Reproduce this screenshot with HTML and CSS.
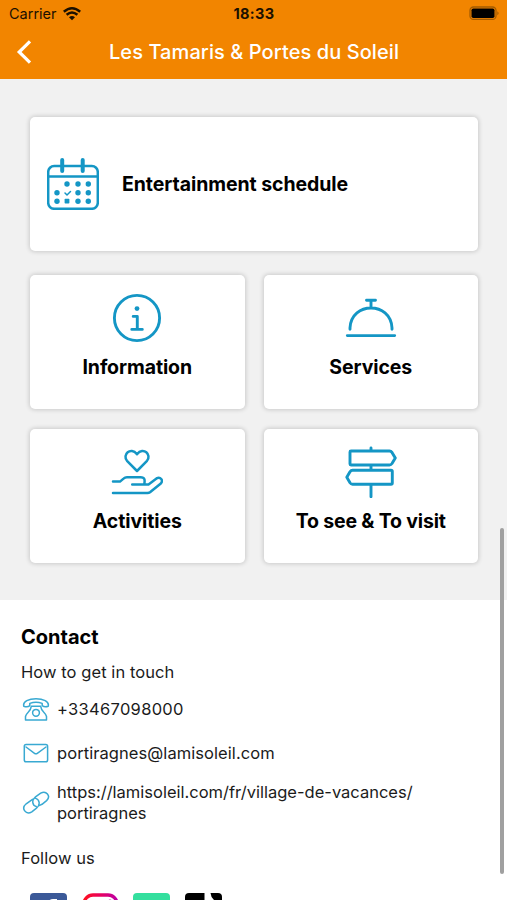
FILE: index.html
```html
<!DOCTYPE html>
<html lang="en">
<head>
<meta charset="utf-8">
<title>Les Tamaris &amp; Portes du Soleil</title>
<link rel="stylesheet" href="styles.css">
</head>
<body>
<header class="header">
  <div class="status">
    <div class="network"><span class="carrier">Carrier</span>
      <svg class="wifi" width="18" height="14" viewBox="0 0 18 14"><path d="M.8 4.8Q9-2.2 17.2 4.8M3.6 7.8Q9 3.2 14.4 7.8" fill="none" stroke="#1b1000" stroke-width="2.5"/><path d="M6 10.2Q9 7.8 12 10.2L9 13.2Z" fill="#1b1000"/></svg>
    </div>
    <time class="clock">18:33</time>
    <svg class="battery" width="31" height="15" viewBox="0 0 31 15"><rect x="1" y="1" width="26" height="12.4" rx="3.5" fill="none" stroke="#a35b00" stroke-width="1.3"/><rect x="2.5" y="2.4" width="23" height="9.6" rx="1.8" fill="#000"/><path d="M28.3 5.2Q31 7.2 28.3 9.2Z" fill="#a35b00"/></svg>
  </div>
  <nav class="navbar">
    <svg class="back" width="16" height="26" viewBox="0 0 16 26"><path d="M14 2.3L3.2 13L14 23.7" fill="none" stroke="#fff" stroke-width="3.2"/></svg>
    <h1 class="title">Les Tamaris &amp; Portes du Soleil</h1>
    <span></span>
  </nav>
</header>
<main>
  <section class="menu">
    <a class="card wide">
      <svg class="icon" width="52" height="52" viewBox="0 0 52 52"><g class="line"><rect x="1.2" y="8" width="49.6" height="42.8" rx="6"/><path d="M1.5 18.5H50.5"/><path d="M15.2 2V13M35.7 2V13" stroke-width="4"/><path d="M18 35L20 37L23.5 33.5" stroke-width="1.5"/></g><g class="dots"><circle cx="20" cy="26" r="2.7"/><circle cx="31" cy="26" r="2.7"/><circle cx="41.3" cy="26" r="2.7"/><circle cx="10" cy="34.7" r="2.7"/><circle cx="31" cy="34.7" r="2.7"/><circle cx="41.3" cy="34.7" r="2.7"/><circle cx="10" cy="43.2" r="2.7"/><rect x="17.6" y="40.8" width="4.8" height="4.8" rx=".8"/><circle cx="31" cy="43.2" r="2.7"/><circle cx="41.3" cy="43.2" r="2.7"/></g></svg>
      <span class="label l-schedule">Entertainment schedule</span>
    </a>
    <a class="card">
      <svg class="icon" width="52" height="52" viewBox="0 0 52 52"><g class="line bold"><circle cx="26" cy="26" r="22.6"/><path d="M22.2 24.4H26.3V37.2M20.8 37.4H31.3"/></g><circle class="dots" cx="26" cy="16.6" r="2.4"/></svg>
      <span class="label">Information</span>
    </a>
    <a class="card">
      <svg class="icon" width="52" height="52" viewBox="0 0 52 52"><g class="line bold"><path d="M21.5 8.2H30.5M26 8.5V15M5 37.3V35.8C6.5 9.3 45.5 9.3 47 35.8V37.3M2.3 43.6H49.7"/></g></svg>
      <span class="label">Services</span>
    </a>
    <a class="card">
      <svg class="icon" width="52" height="52" viewBox="0 0 52 52"><g class="line"><path d="M26 25L16 14.8C11 9 19.5.2 26 8.2C32.5.2 41 9 36 14.8Z"/><path d="M2 35.6H9L12.5 32.6Q14 31.2 16 31.2H29.5C34 31.2 34 34 33.3 38.3M21.2 38.4H37.5L45.5 32.4C49.3 30.4 53 34.2 49.5 37.8L39 46.3Q38 47 36.5 47H2"/></g></svg>
      <span class="label">Activities</span>
    </a>
    <a class="card">
      <svg class="icon" width="52" height="52" viewBox="0 0 52 52"><g class="line bold"><path d="M26 2V5M26 19V24M26 39V50.7M6 5H44.5Q46 5 47 6.4L50.3 12L47 17.5Q46 19 44.5 19H6Q5 19 5 18V6Q5 5 6 5ZM46 24.3H7.5Q6 24.3 5 25.8L1.8 31.3L5 36.8Q6 38.3 7.5 38.3H46Q47.3 38.3 47.3 37V25.5Q47.3 24.3 46 24.3Z"/></g></svg>
      <span class="label l-visit">To see &amp; To visit</span>
    </a>
  </section>
  <section class="contact">
    <h2 class="heading">Contact</h2>
    <p class="text intro">How to get in touch</p>
    <div class="row phone">
      <svg class="small" width="28" height="26" viewBox="0 0 28 26"><g class="thin"><path d="M1.8 10.2C-1 .2 29 .2 26.2 10.2C24 11 21.5 10.6 20.2 9.6V7.4Q14 5.2 7.8 7.4V9.6C6.5 10.8 3.8 11 1.8 10.2Z"/><path d="M3.5 24V20.5Q4 18.5 6 16.5Q8.8 14 9.3 10.3H18.7Q19.2 14 22 16.5Q24 18.5 24.5 20.5V24Z"/><circle cx="14" cy="16.8" r="3.4"/></g></svg>
      <span class="text l-phone">+33467098000</span>
    </div>
    <div class="row mail">
      <svg class="small" width="28" height="26" viewBox="0 0 28 26"><g class="thin"><rect x="2.3" y="4.5" width="23.3" height="17.2" rx="1.8"/><path d="M4 7L12.5 13.3Q13.9 14.3 15.3 13.3L24 7"/></g></svg>
      <span class="text l-mail">portiragnes@lamisoleil.com</span>
    </div>
    <div class="row link">
      <svg class="small" width="28" height="26" viewBox="0 0 28 26"><g class="thin"><path d="M10.5 10.3L4.2 14.8C-1.4 19.5 4 26.3 9.8 22.8L14.5 19.2C18.8 15.6 17.4 10.6 13.8 9.4M17.6 16.4L20 15.3L24.6 11.6C29.4 7 24 1 18.7 4.2L13.5 7.8C9.2 11.4 10.4 16.4 14.2 17.4"/></g></svg>
      <span class="text l-url">https://lamisoleil.com/fr/village-de-vacances/<br>portiragnes</span>
    </div>
    <p class="text follow">Follow us</p>
    <div class="social">
      <svg width="37" height="37" viewBox="0 0 37 37"><rect width="37" height="37" rx="4" fill="#3b5998"/><path d="M27 6H23Q18 6 18 12V16H14V21H18V37H24V21H28L29 16H24V13Q24 11 27 11Z" fill="#fff"/></svg>
      <svg width="37" height="37" viewBox="0 0 37 37"><defs><linearGradient id="ig"><stop stop-color="#ff1020"/><stop offset=".5" stop-color="#e8005e"/><stop offset="1" stop-color="#bd00a5"/></linearGradient></defs><g fill="none" stroke="url(#ig)" stroke-width="3.5"><rect x="2" y="2" width="33" height="33" rx="9"/><circle cx="18.5" cy="18.5" r="8"/></g><circle cx="28" cy="8.5" r="2" fill="#bd00a5"/></svg>
      <svg width="37" height="37" viewBox="0 0 37 37"><rect width="37" height="37" rx="4" fill="#34df9e"/></svg>
      <svg width="37" height="37" viewBox="0 0 37 37"><rect width="37" height="37" rx="4"/><path d="M19.5 0H25.5Q26 6 32 9V15Q28 14 25 12V25A9 9 0 1 1 16 17V22Q14 23 14 26Q17 30 19.5 25Z" fill="#fff"/></svg>
    </div>
  </section>
</main>
<div class="scrollbar"></div>
</body>
</html>
```
FILE: styles.css
```css
* { box-sizing: border-box; }
html, body { height: 900px; overflow: hidden; }
body { margin: 0; background: #fff; color: #000; font-family: Inter, "Liberation Sans", sans-serif; }
h1, h2, p { margin: 0; }
svg { display: block; flex: none; }
.header { height: 79px; background: #f28500; }
.status { display: grid; grid-template-columns: 1fr auto 1fr; align-items: center; height: 27px; padding: 0 7px 0 9px; color: #1b1000; }
.network { display: flex; align-items: center; gap: 6px; }
.carrier { font-size: 14.5px; line-height: 20px; }
.clock { margin-left: -1px; font-size: 14.5px; font-weight: 700; line-height: 20px; letter-spacing: .35px; }
.battery { justify-self: end; }
.navbar { display: grid; grid-template-columns: 34px 1fr 33px; align-items: center; height: 50px; padding: 0 16px; }
.title { color: #fff; font-size: 20px; font-weight: 550; line-height: 26px; letter-spacing: .08px; text-align: center; white-space: nowrap; }
.menu { display: grid; grid-template-columns: 1fr 1fr; grid-template-rows: 138px 134px 134px; column-gap: 19px; row-gap: 20px; height: 521px; padding: 37.5px 29px 0 30px; background: #f1f1f1; }
.card { display: flex; flex-direction: column; align-items: center; padding-top: 17px; border-radius: 5px; background: #fff; box-shadow: 0 0 4px 1px rgba(0,0,0,.16); }
.wide { grid-column: 1 / -1; flex-direction: row; gap: 23px; padding: 0 17px; height: 134px; }
.line { fill: none; stroke: #1496c5; stroke-width: 2.5; stroke-linecap: round; stroke-linejoin: round; }
.bold { stroke-width: 2.9; }
.dots { fill: #1496c5; }
.label { font-size: 19.5px; font-weight: 700; line-height: 24px; letter-spacing: -.1px; margin-top: 11.5px; white-space: nowrap; }
.l-schedule { letter-spacing: -.07px; }
.l-visit { letter-spacing: -.17px; }
.wide .label { margin-top: 0; }
.contact { padding: 24px 21px 0; }
.heading { font-size: 20px; font-weight: 700; line-height: 26px; }
.text { color: #1b1b1b; font-size: 16.5px; line-height: 20px; letter-spacing: .07px; white-space: nowrap; }
.intro { margin-top: 12px; }
.row { display: flex; align-items: center; gap: 7px; height: 26px; padding-left: 1px; }
.phone { margin-top: 14px; }
.l-phone { letter-spacing: .3px; }
.mail { margin-top: 18px; }
.link { height: 40px; margin-top: 16px; }
.l-url { margin-top: 2px; line-height: 21px; letter-spacing: 0; }
.thin { fill: none; stroke: #39a9d2; stroke-width: 1.5; stroke-linecap: round; stroke-linejoin: round; }
.follow { margin-top: 25.5px; }
.social { display: flex; gap: 14.5px; padding-left: 9px; margin-top: 25px; }
.scrollbar { position: absolute; right: 3.5px; top: 528px; width: 3.5px; height: 346px; border-radius: 2px; background: #a0a0a0; }
```
